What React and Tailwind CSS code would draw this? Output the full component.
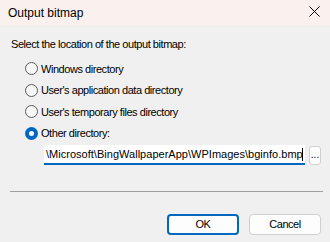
function Radio({ label, checked }) {
  return (
    <div className="flex items-center h-[21.5px]">
      {checked ? (
        <span className="w-[13px] h-[13px] rounded-full bg-[#0067c0] flex items-center justify-center">
          <span className="w-[5px] h-[5px] rounded-full bg-white" />
        </span>
      ) : (
        <span className="w-[13px] h-[13px] rounded-full border border-[#5a5a5a] bg-[#f7f7f7]" />
      )}
      <span className="ml-[3px]">{label}</span>
    </div>
  );
}

export default function App() {
  return (
    <div
      className="w-[330px] h-[242px] bg-[#f0f0f0] text-[11px] tracking-[-0.45px] text-black overflow-hidden flex flex-col"
      style={{ fontFamily: '"Liberation Sans", Arial, sans-serif' }}
    >
      {/* Title bar */}
      <div className="h-[25px] bg-[#faf1ee] flex items-center justify-between pl-[8px] pr-[10px]">
        <span className="text-[12px] tracking-normal">Output bitmap</span>
        <svg width="11" height="11" viewBox="0 0 11 11" className="mt-[-2px]">
          <path d="M0.5 0.5 L10.5 10.5 M10.5 0.5 L0.5 10.5" stroke="#000" strokeWidth="1" />
        </svg>
      </div>

      {/* Body */}
      <div className="flex flex-col pl-[11px] pt-[11px]">
        <div className="leading-[16px]">Select the location of the output bitmap:</div>
        <div className="flex flex-col ml-[14px] mt-[6px] leading-[16px]">
          <Radio label="Windows directory" />
          <Radio label="User's application data directory" />
          <Radio label="User's temporary files directory" />
          <Radio label="Other directory:" checked />
        </div>
        <div className="flex items-center mt-[1px] ml-[33px]">
          <div className="w-[261px] h-[20px] bg-white border-b-2 border-[#0067c0] flex items-center overflow-hidden whitespace-nowrap pl-[2px] relative tracking-[0.02px]">
            <span>\Microsoft\BingWallpaperApp\WPImages\bginfo.bmp</span>
            <span className="absolute right-[2px] top-[3px] w-px h-[13px] bg-black" />
          </div>
          <button className="ml-[4px] w-[12px] h-[19px] bg-[#fdfdfd] border border-[#d0d0d0] rounded-[3px] text-[10px] tracking-normal leading-none flex items-end justify-center pb-[4px]">
            ...
          </button>
        </div>
      </div>

      {/* Separator */}
      <div className="mt-[26px] ml-[10px] mr-[7px] h-px bg-[#a0a0a0]" />

      {/* Buttons */}
      <div className="flex justify-end gap-[10px] pr-[9px] mt-[22px]">
        <button className="w-[72px] h-[21px] bg-[#fdfdfd] border-2 border-[#0067c0] rounded-[4px] leading-none">
          OK
        </button>
        <button className="w-[72px] h-[21px] bg-[#fdfdfd] border border-[#d0d0d0] rounded-[4px] leading-none">
          Cancel
        </button>
      </div>
    </div>
  );
}
